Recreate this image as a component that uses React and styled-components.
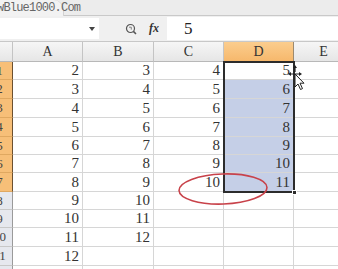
import React from 'react';
import styled, { createGlobalStyle } from 'styled-components';

const GlobalStyle = createGlobalStyle`
  html, body { margin: 0; padding: 0; background: #fff; }
  * { box-sizing: border-box; }
`;

const COLS = [
  { name: '', width: 26 },
  { name: 'A', width: 70 },
  { name: 'B', width: 71 },
  { name: 'C', width: 70 },
  { name: 'D', width: 70 },
  { name: 'E', width: 60 },
];

const ROW_HEIGHTS = [18, 19, 19, 19, 18, 18, 19, 18, 18, 19, 19, 18];

const DATA = [
  [2, 3, 4, 5],
  [3, 4, 5, 6],
  [4, 5, 6, 7],
  [5, 6, 7, 8],
  [6, 7, 8, 9],
  [7, 8, 9, 10],
  [8, 9, 10, 11],
  [9, 10],
  [10, 11],
  [11, 12],
  [12],
  [],
];

const SELECTED_ROWS = 7;

const Window = styled.div`
  position: relative;
  width: 338px;
  height: 269px;
  overflow: hidden;
  background: #fff;
  font-family: "Liberation Serif", "DejaVu Serif", serif;
`;

const TitleBar = styled.div`
  height: 16px;
  background: #ececec;
  border-bottom: 1px solid #c9c9c9;
  display: flex;
  align-items: flex-start;
`;

const Tab = styled.div`
  height: 16px;
  width: 64px;
  background: #f2f2f2;
  border-right: 1px solid #d2d2d2;
  border-top-right-radius: 10px;
  overflow: visible;
  white-space: nowrap;
`;

const Watermark = styled.span`
  display: block;
  margin-left: -3px;
  margin-top: 1px;
  font-family: "Liberation Mono", "DejaVu Sans Mono", monospace;
  font-size: 12px;
  letter-spacing: -0.8px;
  color: #666;
`;

const FormulaBar = styled.div`
  height: 26px;
  display: flex;
  background: #f0f0f0;
  border-bottom: 1px solid #c8c8c8;
`;

const NameBox = styled.div`
  width: 99px;
  margin: 2px 0 2px 0;
  background: #fff;
  display: flex;
  align-items: center;
  justify-content: flex-end;
  padding-right: 4px;
`;

const DropArrow = styled.span`
  width: 0;
  height: 0;
  border-left: 3px solid transparent;
  border-right: 3px solid transparent;
  border-top: 4px solid #444;
`;

const Tools = styled.div`
  width: 68px;
  display: flex;
  align-items: center;
  gap: 12px;
  padding-left: 26px;
`;

const FxLabel = styled.span`
  font-family: "Liberation Serif", serif;
  font-style: italic;
  font-weight: bold;
  font-size: 12px;
  color: #333;
`;

const FormulaInput = styled.div`
  flex: 1;
  background: #fff;
  margin: 1px 0 1px 0;
  display: flex;
  align-items: center;
  padding-left: 17px;
  font-size: 17px;
  color: #222;
`;

const Sheet = styled.div`
  margin-left: -13px;
  display: grid;
  grid-template-columns: ${COLS.map((c) => c.width + 'px').join(' ')};
  grid-template-rows: 20px ${ROW_HEIGHTS.map((h) => h + 'px').join(' ')};
`;

const ColHeader = styled.div`
  background: ${(p) => (p.$active ? 'linear-gradient(#fbcd8e, #f6b86c)' : 'linear-gradient(#f6f6f6, #e6e6e6)')};
  border-right: 1px solid ${(p) => (p.$active ? '#9c8a70' : '#c4c4c4')};
  border-bottom: 1px solid ${(p) => (p.$active ? '#555' : '#b8b8b8')};
  display: flex;
  align-items: center;
  justify-content: center;
  font-size: 14px;
  color: #333;
`;

const RowHeader = styled.div`
  background: ${(p) => (p.$active ? '#f7bf78' : '#e6e8ee')};
  border-right: 1px solid ${(p) => (p.$active ? '#6b5030' : '#9a9a9a')};
  border-bottom: 1px solid ${(p) => (p.$active ? '#e0a860' : '#c8c8c8')};
  display: flex;
  align-items: center;
  justify-content: center;
  font-size: 13px;
  color: #444;
`;

const Cell = styled.div`
  background: ${(p) => (p.$selected ? '#c5cfe7' : '#fff')};
  border-right: 1px solid #d6d6d6;
  border-bottom: 1px solid #d6d6d6;
  display: flex;
  align-items: flex-end;
  justify-content: flex-end;
  padding: 0 3px 0 0;
  font-size: 15px;
  line-height: 17px;
  color: #333;
`;

const Selection = styled.div`
  position: absolute;
  left: 223px;
  top: 61px;
  width: 72px;
  height: 132px;
  border: 2px solid #2c2c2c;
  pointer-events: none;
`;

const FillHandle = styled.div`
  position: absolute;
  left: 292px;
  top: 190px;
  width: 5px;
  height: 5px;
  background: #2c2c2c;
  border: 1px solid #fff;
`;

const Annotation = styled.svg`
  position: absolute;
  left: 177px;
  top: 171px;
`;

const Cursor = styled.svg`
  position: absolute;
  left: 286px;
  top: 65px;
`;

const Magnifier = () => (
  <svg width="12" height="12" viewBox="0 0 12 12">
    <circle cx="5.5" cy="5.5" r="4" fill="none" stroke="#555" strokeWidth="1.2" />
    <path d="M4 4.2 L6.3 4.2 L6.3 6.6" fill="none" stroke="#777" strokeWidth="0.9" />
    <path d="M8.4 8.4 L11 11" stroke="#555" strokeWidth="1.5" />
  </svg>
);

const App = () => {
  const rows = ROW_HEIGHTS.map((_, r) => r);
  return (
    <Window>
      <GlobalStyle />
      <TitleBar>
        <Tab>
          <Watermark>wBlue1000.Com</Watermark>
        </Tab>
      </TitleBar>
      <FormulaBar>
        <NameBox>
          <DropArrow />
        </NameBox>
        <Tools>
          <Magnifier />
          <FxLabel>fx</FxLabel>
        </Tools>
        <FormulaInput>5</FormulaInput>
      </FormulaBar>
      <Sheet>
        {COLS.map((c) => (
          <ColHeader key={'h' + c.name} $active={c.name === 'D'}>
            {c.name}
          </ColHeader>
        ))}
        {rows.map((r) => (
          <React.Fragment key={r}>
            <RowHeader $active={r < SELECTED_ROWS}>{r + 1}</RowHeader>
            {COLS.slice(1).map((c, ci) => (
              <Cell key={c.name} $selected={c.name === 'D' && r > 0 && r < SELECTED_ROWS}>
                {DATA[r][ci] !== undefined ? DATA[r][ci] : ''}
              </Cell>
            ))}
          </React.Fragment>
        ))}
      </Sheet>
      <Selection />
      <FillHandle />
      <Annotation width="94" height="36" viewBox="0 0 94 36">
        <ellipse cx="46" cy="18" rx="44" ry="15" fill="none" stroke="#c8424a" strokeWidth="1.6" transform="rotate(-2 46 18)" />
      </Annotation>
      <Cursor width="24" height="26" viewBox="0 0 24 26">
        <path d="M9 0 L11 3 L9.6 3 L9.6 7 L8.4 7 L8.4 3 L7 3 Z" fill="#222" />
        <path d="M2 9 L5 7 L5 8.4 L13 8.4 L13 7 L16 9 L13 11 L13 9.6 L5 9.6 L5 11 Z" fill="#222" />
        <path d="M9 9 L9 22 L12 19 L14.5 24.5 L16.5 23.6 L14 18.2 L18 18.2 Z" fill="#fff" stroke="#222" strokeWidth="1" strokeLinejoin="round" />
      </Cursor>
    </Window>
  );
};

export default App;
